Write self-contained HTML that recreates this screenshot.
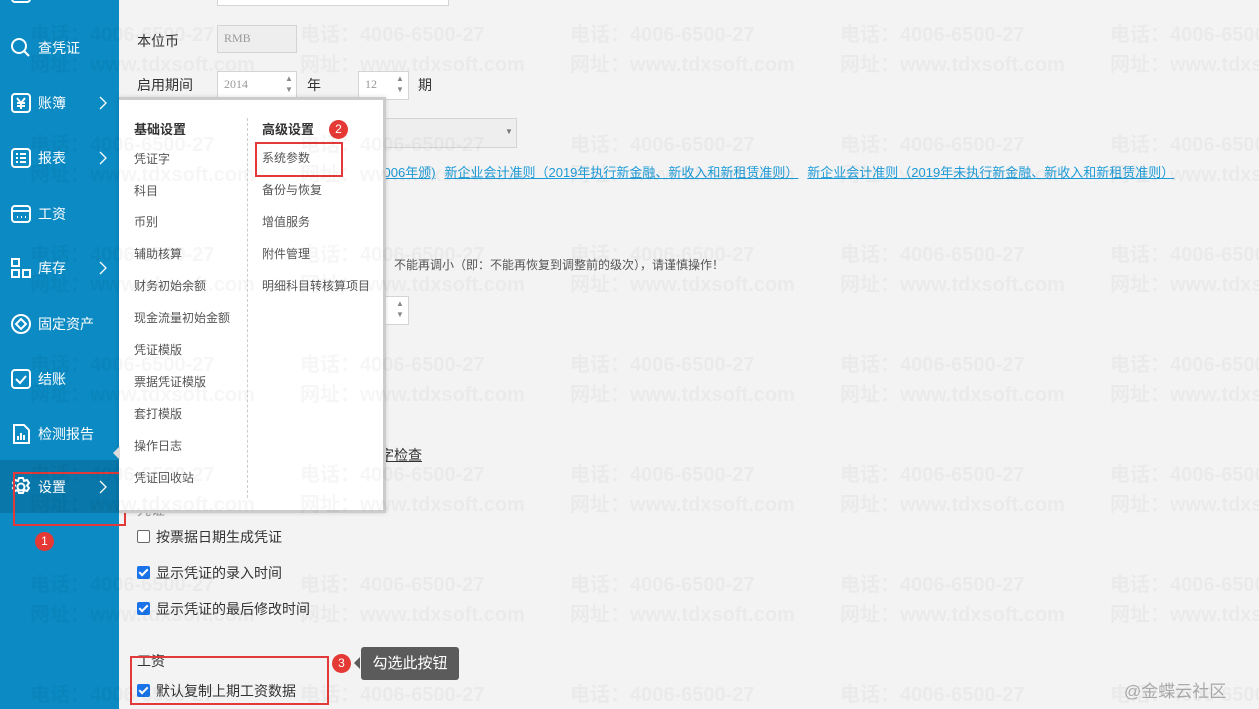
<!DOCTYPE html>
<html><head><meta charset="utf-8"><style>
*{margin:0;padding:0;box-sizing:border-box}
body{width:1259px;height:709px;overflow:hidden;background:#f3f3f3;font-family:"Liberation Sans","Noto Sans CJK SC",sans-serif;position:relative;color:#333}
.a{position:absolute;white-space:nowrap}
#side{position:absolute;left:0;top:0;width:119px;height:709px;background:#0b8ac3}
.si{position:absolute;left:0;width:119px;height:54px;color:#fff;font-size:14px}
.si .t{position:absolute;left:38px;top:50%;transform:translateY(-50%)}
.si svg{position:absolute;left:10px;top:50%;transform:translateY(-50%)}
.si svg.ch{left:98px}
.box{position:absolute;background:#eee;border:1px solid #d4d4d4;font-family:"Liberation Serif",serif;font-size:12px;color:#999;padding:5px 6px}
.lbl{font-size:14px;color:#333}
.pop{position:absolute;left:119px;top:97px;width:267px;height:416px;background:#fff;border:3px solid #ccc;border-left:none;box-shadow:0 0 4px rgba(0,0,0,.15)}
.pi{position:absolute;font-size:12px;color:#555;white-space:nowrap}
.ph{position:absolute;font-size:13px;font-weight:bold;color:#333}
.cb{position:absolute;left:137px;width:13px;height:13px;border-radius:2px;background:#1a73e8}
.cb::after{content:"";position:absolute;left:4px;top:1px;width:3px;height:7px;border:solid #fff;border-width:0 2px 2px 0;transform:rotate(45deg)}
.cbo{position:absolute;left:137px;width:13px;height:13px;border-radius:2px;border:1px solid #666;background:#fff}
.ct{position:absolute;left:156px;font-size:14px;color:#333;white-space:nowrap}
.red{position:absolute;border:2px solid #e23a3a}
.bd{position:absolute;width:19px;height:19px;border-radius:50%;background:#e53935;color:#fff;font-size:12px;text-align:center;line-height:19px}
.lk{color:#1d9bd8;text-decoration:underline;font-size:13px}
#wm{position:absolute;left:0;top:0;width:1259px;height:709px;pointer-events:none;color:rgba(0,0,0,.035);font-weight:bold;font-size:20px}
.wr{position:absolute;left:30px;white-space:nowrap}
.wr span{display:inline-block;width:270px}
</style></head><body>

<div id="side">
<div class="si" style="top:-33px"><svg width="22" height="22"><rect x="2" y="3" width="18" height="16" rx="3" fill="none" stroke="#fff" stroke-width="2"/></svg></div>
<div class="si" style="top:21px"><svg width="22" height="22" fill="none" stroke="#fff" stroke-width="2"><circle cx="9" cy="9" r="7"/><path d="M14 14l5 5"/></svg><span class="t">查凭证</span></div>
<div class="si" style="top:76px"><svg width="22" height="22" fill="none" stroke="#fff" stroke-width="2"><rect x="2" y="2" width="18" height="18" rx="3"/><path d="M7 6l4 5 4-5M11 11v6M7 11h8M7 14h8"/></svg><span class="t">账簿</span><svg class="ch" width="10" height="14" fill="none" stroke="#fff" stroke-width="1.3"><path d="M2 1l6 6-6 6"/></svg></div>
<div class="si" style="top:131px"><svg width="22" height="22" fill="none" stroke="#fff" stroke-width="2"><rect x="2" y="2" width="18" height="18" rx="3"/><path d="M6 7h2M10 7h6M6 11h2M10 11h6M6 15h2M10 15h6"/></svg><span class="t">报表</span><svg class="ch" width="10" height="14" fill="none" stroke="#fff" stroke-width="1.3"><path d="M2 1l6 6-6 6"/></svg></div>
<div class="si" style="top:187px"><svg width="22" height="22" fill="none" stroke="#fff" stroke-width="2"><rect x="2" y="3" width="18" height="16" rx="3"/><path d="M2 8h18M7 14h1M11 14h1M15 14h1"/></svg><span class="t">工资</span></div>
<div class="si" style="top:241px"><svg width="22" height="22" fill="none" stroke="#fff" stroke-width="2"><rect x="2" y="2" width="7" height="7"/><rect x="2" y="13" width="7" height="7"/><rect x="13" y="13" width="7" height="7"/></svg><span class="t">库存</span><svg class="ch" width="10" height="14" fill="none" stroke="#fff" stroke-width="1.3"><path d="M2 1l6 6-6 6"/></svg></div>
<div class="si" style="top:297px"><svg width="22" height="22" fill="none" stroke="#fff" stroke-width="2"><circle cx="11" cy="11" r="9"/><path d="M11 6l5 5-5 5-5-5z"/></svg><span class="t">固定资产</span></div>
<div class="si" style="top:352px"><svg width="22" height="22" fill="none" stroke="#fff" stroke-width="2"><rect x="2" y="2" width="18" height="18" rx="3"/><path d="M6 11l4 4 6-7"/></svg><span class="t">结账</span></div>
<div class="si" style="top:407px"><svg width="22" height="22" fill="none" stroke="#fff" stroke-width="2"><path d="M4 2h10l5 5v13H4z"/><path d="M8 17v-4M11 17v-7M14 17v-5"/></svg><span class="t">检测报告</span></div>
<div class="si" style="top:460px;height:53px;background:#0977a9"><svg width="22" height="22" fill="none" stroke="#fff" stroke-width="2"><circle cx="11" cy="11" r="3.5"/><path d="M9 2h4l1 3 3-1 2 3-2 2.5 2 2.5-2 3-3-1-1 3H9l-1-3-3 1-2-3 2-2.5L3 7l2-3 3 1z"/></svg><span class="t">设置</span><svg class="ch" width="10" height="14" fill="none" stroke="#fff" stroke-width="1.3"><path d="M2 1l6 6-6 6"/></svg></div>
</div>
<div class="red" style="left:13px;top:472px;width:113px;height:54px"></div>
<div class="bd" style="left:35px;top:532px">1</div>

<div class="box" style="left:217px;top:-20px;width:232px;height:26px;background:#fff"></div>
<div class="a lbl" style="left:137px;top:31px">本位币</div>
<div class="box" style="left:217px;top:25px;width:80px;height:28px">RMB</div>
<div class="a lbl" style="left:137px;top:75px">启用期间</div>
<div class="box" style="left:217px;top:71px;width:80px;height:29px;background:#fff">2014</div>
<div class="a" style="left:285px;top:73px;font-size:8px;color:#888;line-height:11px">▲<br>▼</div>
<div class="a lbl" style="left:307px;top:75px">年</div>
<div class="box" style="left:358px;top:71px;width:51px;height:29px;background:#fff">12</div>
<div class="a" style="left:396px;top:73px;font-size:8px;color:#888;line-height:11px">▲<br>▼</div>
<div class="a lbl" style="left:418px;top:75px">期</div>
<div class="box" style="left:300px;top:118px;width:217px;height:30px;background:#eee"></div>
<div class="a" style="left:505px;top:127px;font-size:8px;color:#777">▼</div>
<div class="a" style="left:372px;top:162px"><span class="lk">(2006年颁)</span>&nbsp; <span class="lk">新企业会计准则（2019年执行新金融、新收入和新租赁准则）</span>&nbsp; <span class="lk">新企业会计准则（2019年未执行新金融、新收入和新租赁准则）</span></div>
<div class="a" style="left:370px;top:256px;font-size:12px;color:#555">后，不能再调小（即：不能再恢复到调整前的级次），请谨慎操作！</div>
<div class="box" style="left:360px;top:296px;width:49px;height:29px;background:#fff"></div>
<div class="a" style="left:396px;top:298px;font-size:8px;color:#888;line-height:11px">▲<br>▼</div>
<div class="a lbl" style="left:380px;top:445px;text-decoration:underline">字检查</div>
<div class="a lbl" style="left:137px;top:500px;color:#999">凭证</div>

<div class="pop">
<div class="ph" style="left:15px;top:19px">基础设置</div>
<div class="ph" style="left:143px;top:19px">高级设置</div>
<div style="position:absolute;left:128px;top:18px;height:380px;border-left:1px dashed #ccc"></div>
<div class="pi" style="left:15px;top:50px">凭证字</div>
<div class="pi" style="left:15px;top:82px">科目</div>
<div class="pi" style="left:15px;top:113px">币别</div>
<div class="pi" style="left:15px;top:145px">辅助核算</div>
<div class="pi" style="left:15px;top:177px">财务初始余额</div>
<div class="pi" style="left:15px;top:209px">现金流量初始金额</div>
<div class="pi" style="left:15px;top:241px">凭证模版</div>
<div class="pi" style="left:15px;top:273px">票据凭证模版</div>
<div class="pi" style="left:15px;top:305px">套打模版</div>
<div class="pi" style="left:15px;top:337px">操作日志</div>
<div class="pi" style="left:15px;top:369px">凭证回收站</div>
<div class="pi" style="left:143px;top:49px">系统参数</div>
<div class="pi" style="left:143px;top:81px">备份与恢复</div>
<div class="pi" style="left:143px;top:113px">增值服务</div>
<div class="pi" style="left:143px;top:145px">附件管理</div>
<div class="pi" style="left:143px;top:177px">明细科目转核算项目</div>
</div>
<div class="a" style="left:113px;top:446px;width:0;height:0;border:7px solid transparent;border-right-color:#ddd;border-left:none"></div>
<div class="red" style="left:255px;top:142px;width:88px;height:35px"></div>
<div class="bd" style="left:329px;top:120px">2</div>

<div class="cbo" style="top:530px"></div><div class="ct" style="top:527px">按票据日期生成凭证</div>
<div class="cb" style="top:566px"></div><div class="ct" style="top:563px">显示凭证的录入时间</div>
<div class="cb" style="top:602px"></div><div class="ct" style="top:599px">显示凭证的最后修改时间</div>
<div class="a lbl" style="left:137px;top:651px">工资</div>
<div class="cb" style="top:684px"></div><div class="ct" style="top:681px">默认复制上期工资数据</div>
<div class="red" style="left:130px;top:656px;width:199px;height:49px"></div>
<div class="bd" style="left:332px;top:654px">3</div>
<div class="a" style="left:361px;top:647px;width:98px;height:33px;background:#5b5b5b;border-radius:3px;color:#fff;font-size:15px;line-height:33px;text-align:center">勾选此按钮</div>
<div class="a" style="left:354px;top:657px;width:0;height:0;border:6px solid transparent;border-right-color:#5b5b5b;border-left:none"></div>
<div class="a" style="left:1124px;top:677px;font-size:17px;color:#aaa">@金蝶云社区</div>

<div id="wm">
<div class="wr" style="top:18px"><span>电话：4006-6500-27</span><span>电话：4006-6500-27</span><span>电话：4006-6500-27</span><span>电话：4006-6500-27</span><span>电话：4006-6500-27</span></div>
<div class="wr" style="top:48px"><span>网址：www.tdxsoft.com</span><span>网址：www.tdxsoft.com</span><span>网址：www.tdxsoft.com</span><span>网址：www.tdxsoft.com</span><span>网址：www.tdxsoft.com</span></div>
<div class="wr" style="top:128px"><span>电话：4006-6500-27</span><span>电话：4006-6500-27</span><span>电话：4006-6500-27</span><span>电话：4006-6500-27</span><span>电话：4006-6500-27</span></div>
<div class="wr" style="top:158px"><span>网址：www.tdxsoft.com</span><span>网址：www.tdxsoft.com</span><span>网址：www.tdxsoft.com</span><span>网址：www.tdxsoft.com</span><span>网址：www.tdxsoft.com</span></div>
<div class="wr" style="top:238px"><span>电话：4006-6500-27</span><span>电话：4006-6500-27</span><span>电话：4006-6500-27</span><span>电话：4006-6500-27</span><span>电话：4006-6500-27</span></div>
<div class="wr" style="top:268px"><span>网址：www.tdxsoft.com</span><span>网址：www.tdxsoft.com</span><span>网址：www.tdxsoft.com</span><span>网址：www.tdxsoft.com</span><span>网址：www.tdxsoft.com</span></div>
<div class="wr" style="top:348px"><span>电话：4006-6500-27</span><span>电话：4006-6500-27</span><span>电话：4006-6500-27</span><span>电话：4006-6500-27</span><span>电话：4006-6500-27</span></div>
<div class="wr" style="top:378px"><span>网址：www.tdxsoft.com</span><span>网址：www.tdxsoft.com</span><span>网址：www.tdxsoft.com</span><span>网址：www.tdxsoft.com</span><span>网址：www.tdxsoft.com</span></div>
<div class="wr" style="top:458px"><span>电话：4006-6500-27</span><span>电话：4006-6500-27</span><span>电话：4006-6500-27</span><span>电话：4006-6500-27</span><span>电话：4006-6500-27</span></div>
<div class="wr" style="top:488px"><span>网址：www.tdxsoft.com</span><span>网址：www.tdxsoft.com</span><span>网址：www.tdxsoft.com</span><span>网址：www.tdxsoft.com</span><span>网址：www.tdxsoft.com</span></div>
<div class="wr" style="top:568px"><span>电话：4006-6500-27</span><span>电话：4006-6500-27</span><span>电话：4006-6500-27</span><span>电话：4006-6500-27</span><span>电话：4006-6500-27</span></div>
<div class="wr" style="top:598px"><span>网址：www.tdxsoft.com</span><span>网址：www.tdxsoft.com</span><span>网址：www.tdxsoft.com</span><span>网址：www.tdxsoft.com</span><span>网址：www.tdxsoft.com</span></div>
<div class="wr" style="top:678px"><span>电话：4006-6500-27</span><span>电话：4006-6500-27</span><span>电话：4006-6500-27</span><span>电话：4006-6500-27</span><span>电话：4006-6500-27</span></div>
</div>
</body></html>
